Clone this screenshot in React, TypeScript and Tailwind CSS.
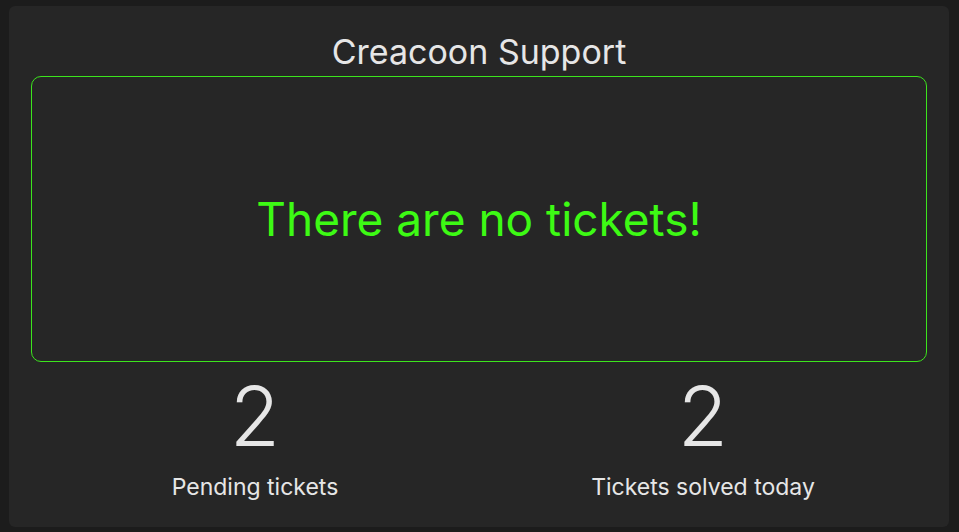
export default function App() {
  const stats = [
    { value: 2, label: "Pending tickets" },
    { value: 2, label: "Tickets solved today" },
  ];

  return (
    <div className="h-[532px] w-[959px] bg-[#1c1c1c] pl-[9px] pr-[10px] pt-[6px] pb-[5px] font-['Inter',sans-serif]">
      <div className="flex h-full flex-col rounded-md bg-[#262626] px-[22px] pt-[28px]">
        {/* title */}
        <h1 className="text-center text-[34px] leading-[36px] text-[#e6e6e6]">Creacoon Support</h1>

        <div className="mt-[6px] flex h-[286px] items-center justify-center rounded-[10px] border border-[#3ce41d]">
          <span className="text-[46px] text-[#3dfa14]">There are no tickets!</span>
        </div>

        <div className="mt-[9px] grid grid-cols-2">
          {stats.map((s) => (
            <div key={s.label} className="flex flex-col items-center text-[#e6e6e6]">
              <span className="text-[82px] leading-[92px] font-light">{s.value}</span>
              <span className="mt-[7px] text-[23px]">{s.label}</span>
            </div>
          ))}
        </div>
      </div>
    </div>
  );
}
